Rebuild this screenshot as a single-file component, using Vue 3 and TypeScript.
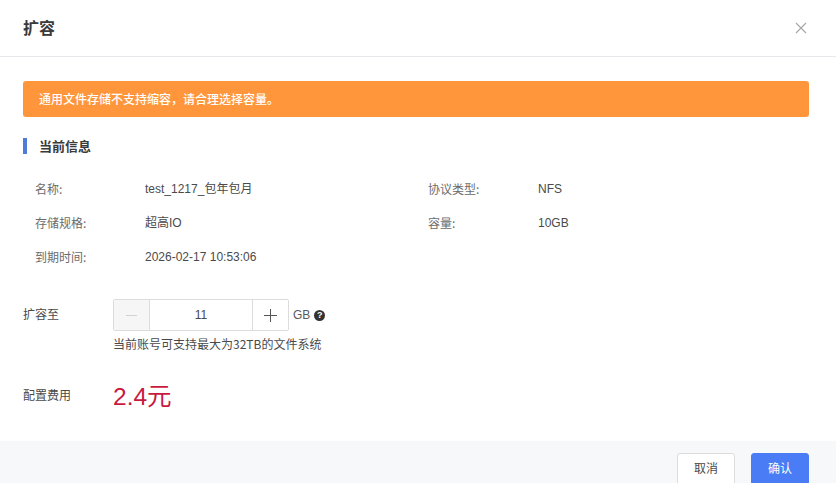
<script setup lang="ts">
const rows = [
  [{ k: '名称:', v: 'test_1217_包年包月' }, { k: '协议类型:', v: 'NFS' }],
  [{ k: '存储规格:', v: '超高IO' }, { k: '容量:', v: '10GB' }],
  [{ k: '到期时间:', v: '2026-02-17 10:53:06' }],
]
</script>

<template>
  <div class="dialog">
    <header class="head">
      <h2 class="title">扩容</h2>
      <svg class="close" width="12" height="12" viewBox="0 0 12 12"><path d="M1 1l10 10M11 1L1 11" stroke="#a8a8a8" stroke-width="1.2" fill="none" /></svg>
    </header>
    <main class="body">
      <div class="alert">通用文件存储不支持缩容，请合理选择容量。</div>
      <h3 class="section">当前信息</h3>
      <div class="info">
        <div v-for="(row, i) in rows" :key="i" class="info-row">
          <div v-for="c in row" :key="c.k" class="cell">
            <span class="key">{{ c.k }}</span>
            <span class="val">{{ c.v }}</span>
          </div>
        </div>
      </div>
      <div class="expand">
        <span class="label">扩容至</span>
        <div class="expand-main">
          <div class="expand-line">
            <div class="stepper">
              <span class="btn minus"><svg width="11" height="11" viewBox="0 0 11 11"><path d="M0 5.5h11" stroke="#d2d2d2" /></svg></span>
              <span class="num">11</span>
              <span class="btn plus"><svg width="13" height="13" viewBox="0 0 13 13"><path d="M0 6.5h13M6.5 0v13" stroke="#555" /></svg></span>
            </div>
            <span class="unit">GB</span>
            <span class="help">?</span>
          </div>
          <p class="hint">当前账号可支持最大为32TB的文件系统</p>
        </div>
      </div>
      <div class="fee">
        <span class="label">配置费用</span>
        <span class="price">2.4元</span>
      </div>
    </main>
    <footer class="foot">
      <button class="cancel">取消</button>
      <button class="ok">确认</button>
    </footer>
  </div>
</template>

<style scoped>
.dialog {
  width: 836px;
  height: 483px;
  overflow: hidden;
  background: #fff;
  color: #4a4a4a;
  font-family: "Noto Sans CJK SC", "Liberation Sans", sans-serif;
  font-size: 12px;
  display: flex;
  flex-direction: column;
}
.head {
  height: 57px;
  flex: none;
  box-sizing: border-box;
  border-bottom: 1px solid #e6e8eb;
  padding: 0 29px 1px 23px;
  display: flex;
  align-items: center;
  justify-content: space-between;
}
.title {
  margin: 0 0 2px;
  font-size: 16px;
  font-weight: 700;
  color: #3a3a3a;
}
.body {
  flex: 1;
  min-height: 0;
  padding: 24px 27px 0 23px;
}
.alert {
  height: 36px;
  line-height: 35px;
  padding-left: 16px;
  background: #ff963c;
  color: #fff;
  border-radius: 3px;
  font-size: 12px;
  font-weight: 500;
}
.section {
  margin: 21px 0 0;
  height: 16px;
  line-height: 16px;
  padding-left: 12px;
  border-left: 4px solid #4f7bd9;
  font-size: 13px;
  font-weight: 700;
  color: #3a3a3a;
}
.info {
  margin-top: 18px;
  padding-left: 12px;
}
.info-row {
  display: flex;
  height: 34px;
  align-items: center;
}
.cell {
  width: 393px;
  flex: none;
  display: flex;
  align-items: center;
  line-height: 18px;
}
.key {
  width: 110px;
  flex: none;
  color: #6b6b6b;
}
.val {
  color: #4a4a4a;
  font-family: "Liberation Sans", "Noto Sans CJK SC", sans-serif;
}
.expand {
  margin-top: 25px;
  display: flex;
}
.label {
  width: 90px;
  color: #4a4a4a;
  flex: none;
}
.expand .label {
  line-height: 30px;
}
.expand-line {
  display: flex;
  align-items: center;
}
.stepper {
  width: 176px;
  height: 32px;
  box-sizing: border-box;
  border: 1px solid #dcdcdc;
  border-radius: 2px;
  display: flex;
}
.btn {
  width: 36px;
  flex: none;
  box-sizing: border-box;
  display: flex;
  align-items: center;
  justify-content: center;
}
.minus {
  background: #f6f6f6;
  border-right: 1px solid #dcdcdc;
}
.plus {
  border-left: 1px solid #dcdcdc;
}
.num {
  flex: 1;
  text-align: center;
  line-height: 30px;
  font-family: "Liberation Sans", sans-serif;
}
.unit {
  margin-left: 4px;
  font-family: "Liberation Sans", sans-serif;
  color: #5a5a5a;
}
.help {
  margin-left: 4px;
  width: 11px;
  height: 11px;
  border-radius: 50%;
  background: #333;
  color: #fff;
  font-size: 9px;
  font-weight: 700;
  line-height: 11px;
  text-align: center;
  font-family: "Liberation Sans", sans-serif;
}
.hint {
  margin: 4px 0 0;
  line-height: 18px;
  color: #4a4a4a;
}
.fee {
  margin-top: 27px;
  display: flex;
  align-items: center;
}
.fee .label {
  margin-top: -6px;
}
.price {
  font-size: 24.5px;
  line-height: 34px;
  color: #c8193f;
  font-family: "Liberation Sans", "Noto Sans CJK SC", sans-serif;
}
.foot {
  height: 42px;
  flex: none;
  background: #f6f8fa;
  padding: 12px 27px 0 0;
  display: flex;
  justify-content: flex-end;
  align-items: flex-start;
  gap: 16px;
  box-sizing: border-box;
}
.foot button {
  height: 32px;
  width: 58px;
  border-radius: 3px;
  font: inherit;
  padding: 0 0 3px;
}
.cancel {
  background: #fff;
  border: 1px solid #dcdcdc;
  color: #4a4a4a;
}
.ok {
  background: #4a7cf6;
  border: 1px solid #4a7cf6;
  color: #fff;
}
</style>
